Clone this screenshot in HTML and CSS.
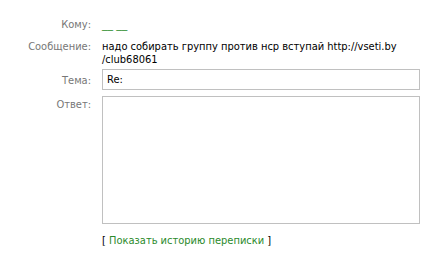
FILE: index.html
```html
<!DOCTYPE html>
<html>
<head>
<meta charset="utf-8">
<link rel="stylesheet" href="styles.css">
</head>
<body>
<div class="form">
  <div class="label l-to">Кому:</div>
  <div class="value v-to"><a class="link uline" href="#">__</a> <a class="link uline" href="#">__</a></div>

  <div class="label l-msg">Сообщение:</div>
  <div class="value v-msg">надо собирать группу против нср вступай http://vseti.by<br>/club68061</div>

  <div class="label l-subj">Тема:</div>
  <div class="value v-subj"><input class="input" type="text" value="Re:"></div>

  <div class="label l-ans">Ответ:</div>
  <div class="value v-ans"><textarea class="textarea"></textarea></div>

  <div class="label"></div>
  <div class="value v-hist">[ <a class="link" href="#">Показать историю переписки</a> ]</div>
</div>
</body>
</html>
```
FILE: styles.css
```css
html, body {
  margin: 0;
  padding: 0;
  background: #fff;
}
body {
  font-family: "DejaVu Sans Condensed", "DejaVu Sans", sans-serif;
  font-size: 11px;
  line-height: 13px;
  color: #000;
}
.form {
  display: grid;
  grid-template-columns: 91px 318px;
  column-gap: 11px;
  padding-top: 18px;
}
.label {
  text-align: right;
  color: #777;
}
.value {
  color: #000;
}
.link {
  color: #2b8a2b;
  text-decoration: none;
}
.uline {
  font-family: "DejaVu Sans", sans-serif;
}
.l-to, .v-to { margin-bottom: 9px; }
.v-msg, .l-msg { margin-bottom: 3px; }
.l-subj { padding-top: 5px; }
.v-subj { margin-bottom: 6px; }
.input {
  display: block;
  box-sizing: border-box;
  width: 318px;
  height: 21px;
  margin: 0;
  padding: 0 4px;
  border: 1px solid #c0c0c0;
  font: inherit;
  color: #000;
  outline: none;
}
.l-ans { padding-top: 2px; }
.textarea {
  display: block;
  box-sizing: border-box;
  width: 318px;
  height: 128px;
  margin: 0;
  padding: 2px 4px;
  border: 1px solid #c0c0c0;
  font: inherit;
  resize: none;
  outline: none;
}
.v-hist { padding-top: 10px; }
```
